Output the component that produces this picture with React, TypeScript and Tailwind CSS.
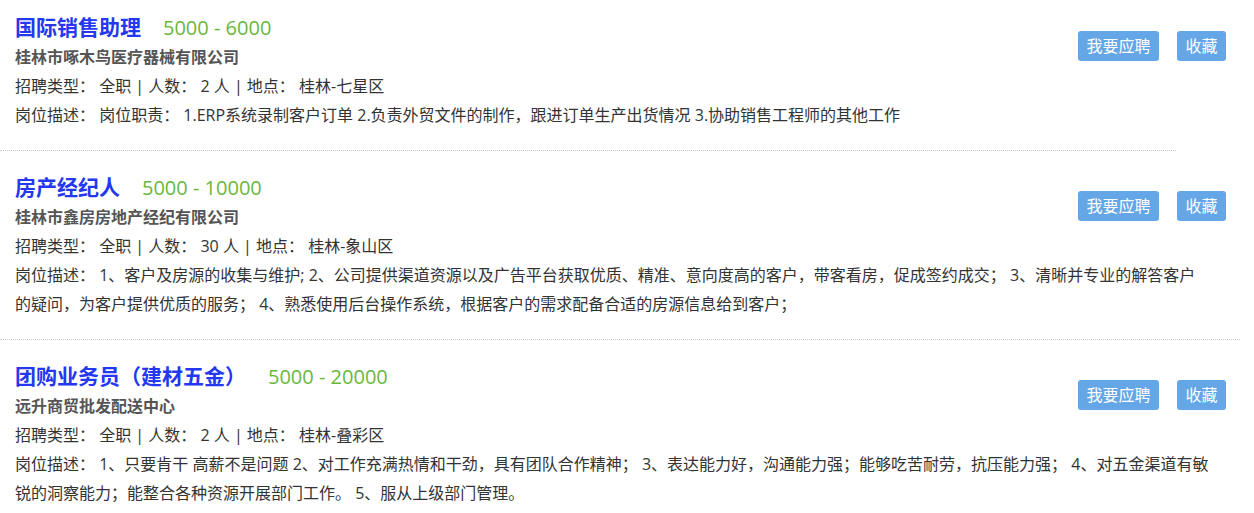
import React from 'react';

type Job = {
  title: string;
  salary: string;
  company: string;
  count: string;
  place: string;
  desc: string;
};

const jobs: Job[] = [
  {
    title: '国际销售助理',
    salary: '5000 - 6000',
    company: '桂林市啄木鸟医疗器械有限公司',
    count: '2',
    place: '桂林-七星区',
    desc: '岗位职责： 1.ERP系统录制客户订单 2.负责外贸文件的制作，跟进订单生产出货情况 3.协助销售工程师的其他工作',
  },
  {
    title: '房产经纪人',
    salary: '5000 - 10000',
    company: '桂林市鑫房房地产经纪有限公司',
    count: '30',
    place: '桂林-象山区',
    desc: '1、客户及房源的收集与维护; 2、公司提供渠道资源以及广告平台获取优质、精准、意向度高的客户，带客看房，促成签约成交； 3、清晰并专业的解答客户\n的疑问，为客户提供优质的服务； 4、熟悉使用后台操作系统，根据客户的需求配备合适的房源信息给到客户；',
  },
  {
    title: '团购业务员（建材五金）',
    salary: '5000 - 20000',
    company: '远升商贸批发配送中心',
    count: '2',
    place: '桂林-叠彩区',
    desc: '1、只要肯干 高薪不是问题 2、对工作充满热情和干劲，具有团队合作精神； 3、表达能力好，沟通能力强；能够吃苦耐劳，抗压能力强； 4、对五金渠道有敏\n锐的洞察能力；能整合各种资源开展部门工作。 5、服从上级部门管理。',
  },
];

const JobItem = ({ job, first }: { job: Job; first: boolean }) => (
  <div className={`pl-[15px] pr-[28px] pb-[20px] ${first ? 'pt-[13px]' : 'pt-[22px]'}`}>
    {/* buttons float right so the long description runs underneath */}
    <div className="float-right mt-[18px] flex gap-[18px]">
      <button className="h-[30px] w-[81px] rounded-[3px] bg-[#64a6e6] text-[16px] text-white">我要应聘</button>
      <button className="h-[30px] w-[49px] rounded-[3px] bg-[#64a6e6] text-[16px] text-white">收藏</button>
    </div>
    <div className="flex h-[30px] items-center">
      <span className="text-[21px] font-bold text-[#2338f0]">{job.title}</span>
      <span className="ml-[22px] text-[20px] text-[#68b83e]">{job.salary}</span>
    </div>
    <div className="text-[16px] font-bold leading-[29px] text-[#555]">{job.company}</div>
    <div className="text-[16px] leading-[29px] text-[#333]">
      招聘类型： 全职 | 人数： {job.count} 人 | 地点： {job.place}
    </div>
    <div className="whitespace-pre-line text-[16px] leading-[29px] text-[#333]">
      岗位描述：  {job.desc}
    </div>
  </div>
);

export default function App() {
  return (
    <div className="w-[1254px] bg-white font-['Open_Sans','Noto_Sans_CJK_SC',sans-serif]">
      <JobItem job={jobs[0]} first />
      <div className="w-[1176px] border-t border-dotted border-[#ccc]" />
      <JobItem job={jobs[1]} first={false} />
      <div className="w-[1240px] border-t border-dotted border-[#ccc]" />
      <JobItem job={jobs[2]} first={false} />
    </div>
  );
}
